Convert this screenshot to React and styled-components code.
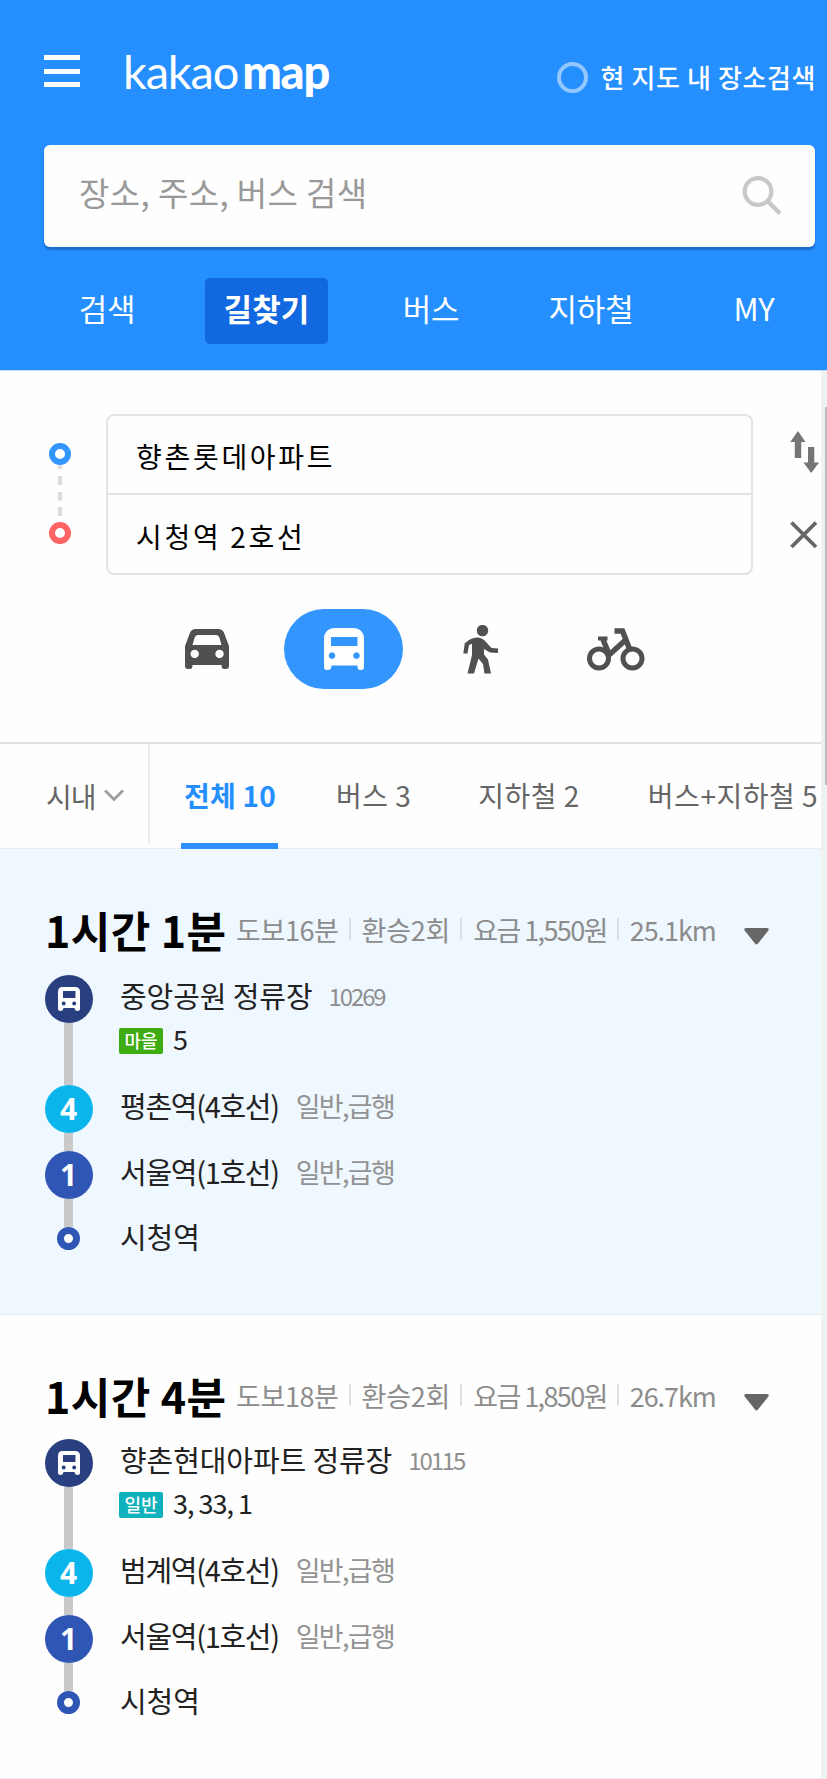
import React, { useState } from "react";
import styled, { createGlobalStyle } from "styled-components";

const GlobalStyle = createGlobalStyle`
  * {
    box-sizing: border-box;
  }
  body {
    margin: 0;
    background: #fefefe;
    font-family: "Noto Sans CJK KR", sans-serif;
    color: #222;
    overflow: hidden;
  }
  button {
    border: 0;
    padding: 0;
    margin: 0;
    background: none;
    font: inherit;
    color: inherit;
    cursor: pointer;
  }
  svg {
    display: block;
  }
`;

const Page = styled.div`
  width: 827px;
  height: 1779px;
  overflow: hidden;
  display: flex;
  flex-direction: column;
`;

/* header */
const Header = styled.header`
  height: 371px;
  flex: none;
  background: #258fff;
  border-bottom: 1px solid #bfdcff;
  padding: 0 12px 0 44px;
  color: #fff;
`;
const TopBar = styled.div`
  height: 145px;
  display: flex;
  align-items: flex-start;
`;
const MenuButton = styled.button`
  width: 36px;
  height: 32px;
  margin-top: 55px;
  display: flex;
  flex-direction: column;
  justify-content: space-between;
`;
const MenuBar = styled.span`
  height: 5px;
  background: #fff;
`;
const Logo = styled.h1`
  margin: 40px 0 0 43px;
  font-family: Lato, sans-serif;
  font-size: 47px;
  line-height: 62px;
  font-weight: 400;
  letter-spacing: -1.2px;
  b {
    margin-left: 4px;
    font-weight: 900;
    letter-spacing: -1.2px;
  }
`;
const ScopeToggle = styled.button`
  margin: 57px 0 0 auto;
  height: 40px;
  display: flex;
  align-items: center;
  gap: 12px;
  font-size: 26px;
  font-weight: 500;
  letter-spacing: 0.6px;
  white-space: nowrap;
`;
const ScopeLabel = styled.span`
  padding-bottom: 2px;
  margin-right: -1px;
`;
const Ring = styled.span`
  width: 31px;
  height: 31px;
  border: 4px solid #93c7ff;
  border-radius: 50%;
`;
const SearchBox = styled.div`
  height: 102px;
  padding: 0 33px 0 35px;
  display: flex;
  align-items: center;
  justify-content: space-between;
  background: #fefefe;
  border-radius: 6px;
  box-shadow: 0 3px 2px #1a6dcb;
`;
const Placeholder = styled.span`
  font-size: 33px;
  line-height: 48px;
  padding-bottom: 8px;
  letter-spacing: 0.4px;
  color: #999;
`;
const Nav = styled.nav`
  display: flex;
  margin-top: 31px;
  height: 66px;
`;
const NavItem = styled.button`
  width: ${({ width }) => width}px;
  margin-left: ${({ gap }) => gap || 0}px;
  height: 66px;
  padding-bottom: 8px;
  border-radius: 5px;
  font-size: 31px;
  font-weight: ${({ active }) => (active ? 700 : 400)};
  letter-spacing: ${({ active }) => (active ? 0.1 : -0.2)}px;
  background: ${({ active }) => (active ? "#1168e0" : "transparent")};
`;

/* scrolling body */
const Body = styled.div`
  flex: 1;
  display: flex;
`;
const Content = styled.main`
  width: 821px;
`;
const ScrollTrack = styled.div`
  width: 6px;
  background: #f0f2f2;
  padding-top: 36px;
`;
const ScrollThumb = styled.div`
  width: 2px;
  height: 378px;
  margin-left: 4px;
  background: #bcbcbc;
`;

/* origin / destination form */
const RouteForm = styled.section`
  height: 373px;
  border-bottom: 2px solid #e1e1e1;
  padding-top: 43px;
`;
const Points = styled.div`
  display: flex;
  height: 161px;
  padding-left: 49px;
`;
const PointRail = styled.div`
  width: 22px;
  padding-top: 29px;
`;
const Fields = styled.div`
  width: 647px;
  margin-left: 35px;
  border: 2px solid #e3e3e3;
  border-radius: 8px;
`;
const Field = styled.div`
  height: ${({ last }) => (last ? 78 : 79)}px;
  padding: 3px 0 0 28px;
  display: flex;
  align-items: center;
  font-size: 28px;
  letter-spacing: 2.7px;
  color: #000;
  border-bottom: ${({ last }) => (last ? "0" : "2px solid #e3e3e3")};
`;
const FieldActions = styled.div`
  margin-left: 37px;
  padding-top: 17px;
  display: flex;
  flex-direction: column;
  gap: 47px;
`;
const Modes = styled.div`
  display: flex;
  align-items: center;
  gap: 18px;
  margin-top: 34px;
  padding-left: 147px;
`;
const Mode = styled.button`
  width: 119px;
  height: 80px;
  border-radius: 40px;
  display: flex;
  align-items: center;
  justify-content: center;
  color: ${({ active }) => (active ? "#fff" : "#505050")};
  background: ${({ active }) => (active ? "#3396ff" : "transparent")};
`;

/* filter tabs */
const Filters = styled.div`
  height: 105px;
  border-bottom: 1px solid #ececec;
  display: flex;
  color: #666;
  font-size: 28px;
`;
const AreaSelect = styled.button`
  width: 150px;
  height: 99px;
  padding: 4px 24px 0 46px;
  display: flex;
  align-items: center;
  justify-content: space-between;
  border-right: 2px solid #ebebeb;
  letter-spacing: -1px;
`;
const Tab = styled.button`
  height: 105px;
  margin-left: ${({ gap }) => gap}px;
  padding: ${({ active }) => (active ? "2px 2px 0 3px" : "0 2px 4px 3px")};
  white-space: nowrap;
  font-weight: ${({ active }) => (active ? 700 : 400)};
  letter-spacing: ${({ active }) => (active ? 0.2 : 0.5)}px;
  color: ${({ active }) => (active ? "#258fff" : "#666")};
  border-bottom: ${({ active }) => (active ? "6px solid #2c91ff" : "0")};
`;

/* route card */
const Card = styled.article`
  height: ${({ first }) => (first ? 466 : 464)}px;
  padding: 49px 0 0 44px;
  background: ${({ first }) => (first ? "#eff7ff" : "#fefefe")};
  border-bottom: 1px solid #ececec;
`;
const CardHead = styled.div`
  display: flex;
  height: ${({ first }) => (first ? 77 : 75)}px;
`;
const Duration = styled.h2`
  width: 191px;
  margin: 0 0 0 1px;
  font-size: 43px;
  line-height: 62px;
  font-weight: 700;
  letter-spacing: 0.4px;
  color: #000;
  white-space: nowrap;
`;
const Facts = styled.ul`
  display: flex;
  align-items: center;
  height: 62px;
  width: 508px;
  margin: 0;
  padding: 0;
  list-style: none;
  font-size: 27px;
  color: #8c8c8c;
`;
const Fact = styled.li`
  display: flex;
  align-items: center;
  white-space: nowrap;
  letter-spacing: ${({ spacing }) => spacing}px;
  &:not(:first-child)::before {
    content: "";
    width: 2px;
    height: 22px;
    margin: 0 11px 0 10px;
    background: #dedfe1;
  }
`;
const Expand = styled.button`
  height: 16px;
  margin-top: 30px;
`;
const Stop = styled.div`
  display: flex;
  height: ${({ height }) => height}px;
`;
const Rail = styled.div`
  width: 49px;
  display: flex;
  flex-direction: column;
  align-items: center;
`;
const Marker = styled.div`
  width: 48px;
  height: 48px;
  flex: none;
  border-radius: 50%;
  display: flex;
  align-items: center;
  justify-content: center;
  background: ${({ color }) => color};
  color: #fff;
  font: 700 30px/48px "Open Sans", sans-serif;
`;
const EndMarker = styled.div`
  width: 23px;
  height: 23px;
  border: 7px solid #2f55b5;
  border-radius: 50%;
  background: #fff;
`;
const Connector = styled.div`
  width: 9px;
  flex: 1;
  background: #c9c9c9;
`;
const StopInfo = styled.div`
  margin-left: 27px;
  margin-top: ${({ end }) => (end ? -11 : 0)}px;
  white-space: nowrap;
`;
const StopLine = styled.div`
  height: 40px;
  display: flex;
  align-items: center;
`;
const StopName = styled.span`
  font-size: 29px;
  letter-spacing: ${({ tight }) => (tight ? -1.3 : -0.1)}px;
`;
const StopCode = styled.span`
  margin-left: 16px;
  font-size: 24px;
  letter-spacing: -2.1px;
  color: #8f8f8f;
`;
const StopNote = styled.span`
  margin-left: 17px;
  font-size: 27px;
  letter-spacing: -1.7px;
  color: #939393;
`;
const BusLine = styled.div`
  display: flex;
  align-items: center;
  gap: 10px;
  height: 26px;
  margin: 13px 0 0 -1px;
`;
const BusNumbers = styled.span`
  padding-bottom: 5px;
  font-size: 27px;
  letter-spacing: -1px;
`;
const Badge = styled.span`
  width: 44px;
  height: 26px;
  border-radius: 2px;
  background: ${({ color }) => color};
  color: #fff;
  font-size: 18px;
  font-weight: 500;
  line-height: 24px;
  text-align: center;
`;

const SearchIcon = () => (
  <svg width="40" height="40" viewBox="0 0 40 40" fill="none" stroke="#c8c8c8">
    <circle cx="16" cy="15.500" r="13.3" strokeWidth="4.2" />
    <path d="M25.5 25 38 37.500" strokeWidth="4.4" />
  </svg>
);

const PointsIcon = () => (
  <svg width="22" height="102" viewBox="0 0 22 102" fill="none">
    <path d="M11 22v4M11 33v9M11 49v8.5M11 64v9" stroke="#dcdcdc" strokeWidth="4.4" />
    <circle cx="11" cy="11" r="8" stroke="#3396ff" strokeWidth="6" />
    <circle cx="11" cy="90" r="8" stroke="#ff6363" strokeWidth="6" />
  </svg>
);

const SwapIcon = () => (
  <svg width="30" height="43" viewBox="0 0 30 43" fill="#757575">
    <path d="M8 0 15.5 11H11.2V27H4.8V11H.3ZM21.2 42 29 31.5H24.3V16H18V31.5H13.5Z" />
  </svg>
);

const CloseIcon = () => (
  <svg width="28" height="28" viewBox="0 0 28 28" stroke="#666" strokeWidth="3.8">
    <path d="M1.5 1.5 26 26M26 1.5 1.5 26" />
  </svg>
);

const CarIcon = () => (
  <svg width="44" height="40" viewBox="0 0 44 40" fill="currentColor" fillRule="evenodd">
    <path d="M11 0H33Q38 0 39.5 5L44 17V37Q44 40 41 40H39Q36.500 40 36.500 36H7.500Q7.500 40 5 40H3Q0 40 0 37V17L4.500 5Q6 0 11 0ZM13 6Q10.500 6 9.500 9L7.500 16H36.500L34.500 9Q33.500 6 31 6ZM9.700 20.700A4.200 4.200 0 1 0 9.710 20.700ZM34.500 20.700A4.200 4.200 0 1 0 34.510 20.700Z" />
  </svg>
);

const BusIcon = () => (
  <svg width="40" height="42" viewBox="0 0 40 42" fill="currentColor" fillRule="evenodd">
    <path d="M10 0H30Q40 1 40 11V39Q40 42 37 42H36Q33.500 42 33.500 37.500H7.500Q7.500 42 4 42H3Q0 42 0 39V11Q0 1 10 0ZM7 9V18H33.500V9ZM8 24.300A3.300 3.300 0 1 0 8.010 24.300ZM32.500 24.300A3.300 3.300 0 1 0 32.510 24.300Z" />
  </svg>
);

const WalkIcon = () => (
  <svg width="35" height="49" viewBox="0 0 35 49" fill="currentColor">
    <circle cx="19.500" cy="5.600" r="5.700" />
    <path d="M3.500 17Q8 12.500 15 12.500Q20 13 23 17L28.500 23L35 23.500V28L27 27.500L21 24V29.500L25 34.500L28 48.500H21.500L20 39L15.500 33.500L11 48.500H4.500L9 30V18.800L6 20L4.500 28.500H.3L1.800 18Z" />
  </svg>
);

const BikeIcon = () => (
  <svg width="61" height="43" viewBox="0 0 61 43" fill="none" stroke="currentColor">
    <circle cx="12" cy="30.500" r="9.500" strokeWidth="5" />
    <circle cx="45.500" cy="30.500" r="9.500" strokeWidth="5" />
    <path d="M11 10.500H20.500" strokeWidth="4" />
    <path d="M16 11.500 22 26" strokeWidth="5.500" />
    <path d="M27.500 3H35.500L43 22M38 12.500 22 27" strokeWidth="5.500" />
  </svg>
);

const StopBusIcon = () => (
  <svg width="24" height="26" viewBox="0 0 24 26" fill="#fff" fillRule="evenodd">
    <path d="M5.500 1H18Q23 1 23 6V22.500Q23 25 20.500 25Q18 25 17.500 22H6.500Q6 25 3.500 25Q1 25 1 22.500V6Q1 1 5.500 1ZM6 5V12H18.500V5ZM6.700 15.500A2 2 0 1 0 6.710 15.500ZM17.200 15.500A2 2 0 1 0 17.210 15.500Z" />
  </svg>
);

const ChevronIcon = () => (
  <svg width="20" height="13" viewBox="0 0 20 13" fill="none" stroke="#a0a0a0" strokeWidth="3">
    <path d="M1 1.500 10 10.500 19 1.500" />
  </svg>
);

const TriangleIcon = () => (
  <svg width="25" height="17" viewBox="0 0 25 17" fill="#666">
    <path d="M2 0H23Q26 .5 24 3L14 15.500Q12.500 17.500 11 15.500L1 3Q-1 .5 2 0Z" />
  </svg>
);

const navItems = [
  { label: "검색", width: 124, gap: 1 },
  { label: "길찾기", width: 123, gap: 36 },
  { label: "버스", width: 124, gap: 41 },
  { label: "지하철", width: 124, gap: 36 },
  { label: "MY", width: 90, gap: 56 },
];

const modes = [
  { name: "car", Icon: CarIcon },
  { name: "bus", Icon: BusIcon },
  { name: "walk", Icon: WalkIcon },
  { name: "bike", Icon: BikeIcon },
];

const tabs = [
  { label: "전체 10", gap: 31 },
  { label: "버스 3", gap: 55 },
  { label: "지하철 2", gap: 62 },
  { label: "버스+지하철 5", gap: 63 },
];

const routes = [
  {
    duration: "1시간 1분",
    facts: ["도보16분", "환승2회", "요금 1,550원", "25.1km"],
    stop: { name: "중앙공원 정류장", code: "10269", badge: "마을", color: "#3fac11", buses: "5" },
    transfer: "평촌역(4호선)",
  },
  {
    duration: "1시간 4분",
    facts: ["도보18분", "환승2회", "요금 1,850원", "26.7km"],
    stop: { name: "향촌현대아파트 정류장", code: "10115", badge: "일반", color: "#0fb1bd", buses: "3, 33, 1" },
    transfer: "범계역(4호선)",
  },
];

const factSpacing = [-0.4, -0.2, -1.6, -1.1];

const SubwayStop = ({ line, color, name, height }) => (
  <Stop height={height}>
    <Rail>
      <Marker color={color}>{line}</Marker>
      <Connector />
    </Rail>
    <StopInfo>
      <StopLine>
        <StopName tight>{name}</StopName>
        <StopNote>일반,급행</StopNote>
      </StopLine>
    </StopInfo>
  </Stop>
);

const RouteCard = ({ route, first }) => (
  <Card first={first}>
    <CardHead first={first}>
      <Duration>{route.duration}</Duration>
      <Facts>
        {route.facts.map((fact, i) => (
          <Fact key={fact} spacing={factSpacing[i]}>
            {fact}
          </Fact>
        ))}
      </Facts>
      <Expand>
        <TriangleIcon />
      </Expand>
    </CardHead>
    <Stop height={110}>
      <Rail>
        <Marker color="#2a3f80">
          <StopBusIcon />
        </Marker>
        <Connector />
      </Rail>
      <StopInfo>
        <StopLine>
          <StopName>{route.stop.name}</StopName>
          <StopCode>{route.stop.code}</StopCode>
        </StopLine>
        <BusLine>
          <Badge color={route.stop.color}>{route.stop.badge}</Badge>
          <BusNumbers>{route.stop.buses}</BusNumbers>
        </BusLine>
      </StopInfo>
    </Stop>
    <SubwayStop line="4" color="#0ab5ec" name={route.transfer} height={66} />
    <SubwayStop line="1" color="#2f55b5" name="서울역(1호선)" height={76} />
    <Stop height={23}>
      <Rail>
        <EndMarker />
      </Rail>
      <StopInfo end>
        <StopLine>
          <StopName>시청역</StopName>
        </StopLine>
      </StopInfo>
    </Stop>
  </Card>
);

const App = () => {
  const [nav, setNav] = useState("길찾기");
  const [mode, setMode] = useState("bus");
  const [tab, setTab] = useState("전체 10");
  return (
    <Page>
      <GlobalStyle />
      <Header>
        <TopBar>
          <MenuButton>
            <MenuBar />
            <MenuBar />
            <MenuBar />
          </MenuButton>
          <Logo>
            kakao<b>map</b>
          </Logo>
          <ScopeToggle>
            <Ring />
            <ScopeLabel>현 지도 내 장소검색</ScopeLabel>
          </ScopeToggle>
        </TopBar>
        <SearchBox>
          <Placeholder>장소, 주소, 버스 검색</Placeholder>
          <SearchIcon />
        </SearchBox>
        <Nav>
          {navItems.map(({ label, width, gap }) => (
            <NavItem key={label} width={width} gap={gap} active={nav === label} onClick={() => setNav(label)}>
              {label}
            </NavItem>
          ))}
        </Nav>
      </Header>
      <Body>
        <Content>
          <RouteForm>
            <Points>
              <PointRail>
                <PointsIcon />
              </PointRail>
              <Fields>
                <Field>향촌롯데아파트</Field>
                <Field last>시청역 2호선</Field>
              </Fields>
              <FieldActions>
                <SwapIcon />
                <CloseIcon />
              </FieldActions>
            </Points>
            <Modes>
              {modes.map(({ name, Icon }) => (
                <Mode key={name} active={mode === name} onClick={() => setMode(name)}>
                  <Icon />
                </Mode>
              ))}
            </Modes>
          </RouteForm>
          <Filters>
            <AreaSelect>
              시내
              <ChevronIcon />
            </AreaSelect>
            {tabs.map(({ label, gap }) => (
              <Tab key={label} gap={gap} active={tab === label} onClick={() => setTab(label)}>
                {label}
              </Tab>
            ))}
          </Filters>
          {routes.map((route, i) => (
            <RouteCard key={route.duration} route={route} first={i === 0} />
          ))}
        </Content>
        <ScrollTrack>
          <ScrollThumb />
        </ScrollTrack>
      </Body>
    </Page>
  );
};

export default App;
